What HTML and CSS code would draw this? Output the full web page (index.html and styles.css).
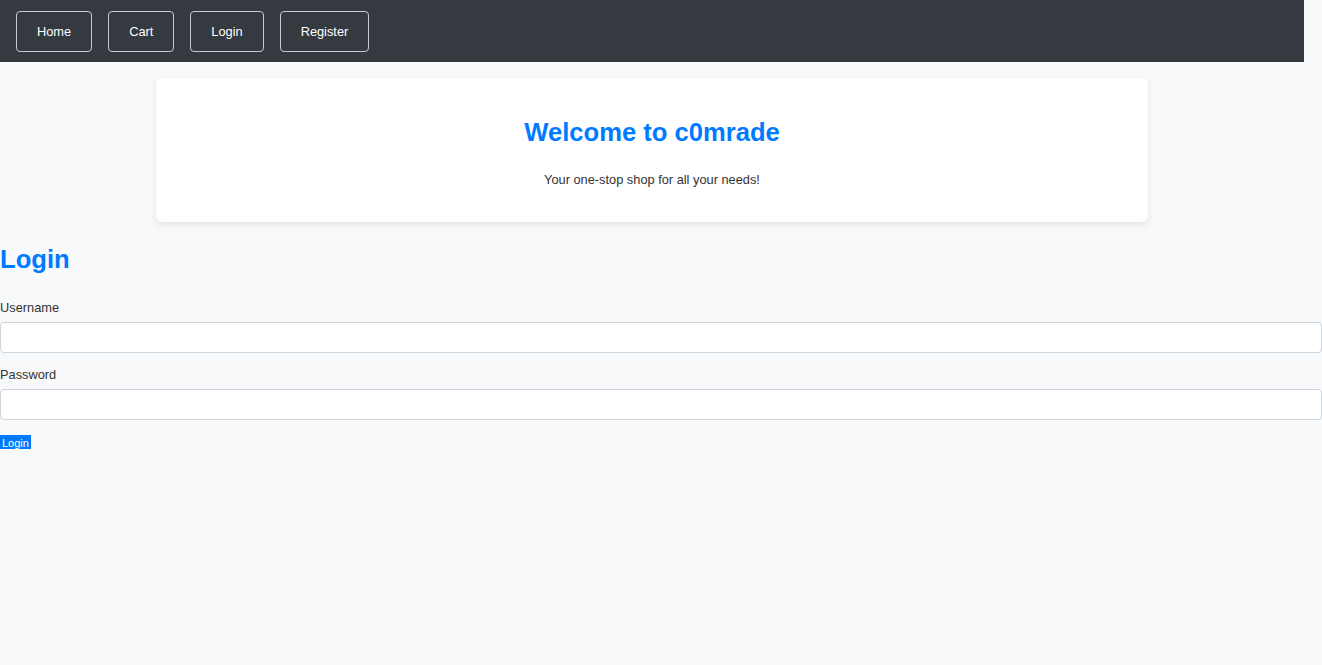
FILE: index.html
```html
<!DOCTYPE html>
<html lang="en">
<head>
<meta charset="utf-8">
<title>c0mrade</title>
<link rel="stylesheet" href="styles.css">
</head>
<body>
<nav class="nav">
  <a class="nav-btn" href="#">Home</a>
  <a class="nav-btn" href="#">Cart</a>
  <a class="nav-btn" href="#">Login</a>
  <a class="nav-btn" href="#">Register</a>
</nav>
<div class="hero-wrap">
  <header class="hero">
    <h1 class="hero-title">Welcome to c0mrade</h1>
    <p class="hero-sub">Your one-stop shop for all your needs!</p>
  </header>
</div>
<main class="login">
  <h2 class="login-title">Login</h2>
  <form class="login-form">
    <div class="field">
      <label class="field-label" for="username">Username</label>
      <input class="field-input" id="username" type="text">
    </div>
    <div class="field">
      <label class="field-label" for="password">Password</label>
      <input class="field-input" id="password" type="password">
    </div>
    <button class="submit" type="submit">Login</button>
  </form>
</main>
</body>
</html>
```
FILE: styles.css
```css
* { box-sizing: border-box; }
html, body {
  margin: 0;
  padding: 0;
  background: #f8f9fa;
  font-family: "Liberation Sans", Arial, sans-serif;
  color: #333;
  font-size: 12.8px;
}
.nav {
  width: 1304px;
  height: 62px;
  background: #343a40;
  display: flex;
  gap: 16px;
  padding: 11px 16px 10px;
}
.nav-btn {
  display: block;
  height: 41px;
  padding: 12px 20px;
  line-height: 15px;
  font-size: 12.8px;
  color: #fff;
  text-decoration: none;
  border: 1px solid #c8c9cb;
  border-radius: 4px;
}
.hero-wrap {
  width: 1304px;
  padding-top: 16px;
}
.hero {
  width: 992px;
  margin: 0 auto;
  background: #fff;
  border-radius: 6px;
  box-shadow: 0 2px 6px rgba(0, 0, 0, 0.1);
  padding: 20px;
  text-align: center;
}
.hero-title {
  margin: 19px 0 25px;
  font-size: 25.6px;
  line-height: 30px;
  font-weight: bold;
  color: #007bff;
}
.hero-sub {
  margin: 0 0 15px;
  line-height: 15px;
  font-size: 12.8px;
  color: #333;
}
.login-title {
  margin: 22px 0 26px;
  font-size: 25.6px;
  line-height: 30px;
  font-weight: bold;
  color: #007bff;
}
.login-form {
  margin: 0;
}
.field {
  margin-bottom: 14px;
}
.field-label {
  display: block;
  line-height: 15px;
  font-size: 12.8px;
  margin-bottom: 7px;
  color: #333;
}
.field-input {
  display: block;
  width: 100%;
  height: 31px;
  border: 1px solid #ced4da;
  border-radius: 4px;
  background: #fff;
  padding: 0 8px;
  font: inherit;
}
.submit {
  display: block;
  margin-top: 15px;
  height: 14px;
  padding: 2px 2px 0;
  border: none;
  background: #007bff;
  color: #fff;
  font-family: "Liberation Sans", Arial, sans-serif;
  font-size: 11px;
  line-height: 12px;
  border-radius: 0;
}
```
